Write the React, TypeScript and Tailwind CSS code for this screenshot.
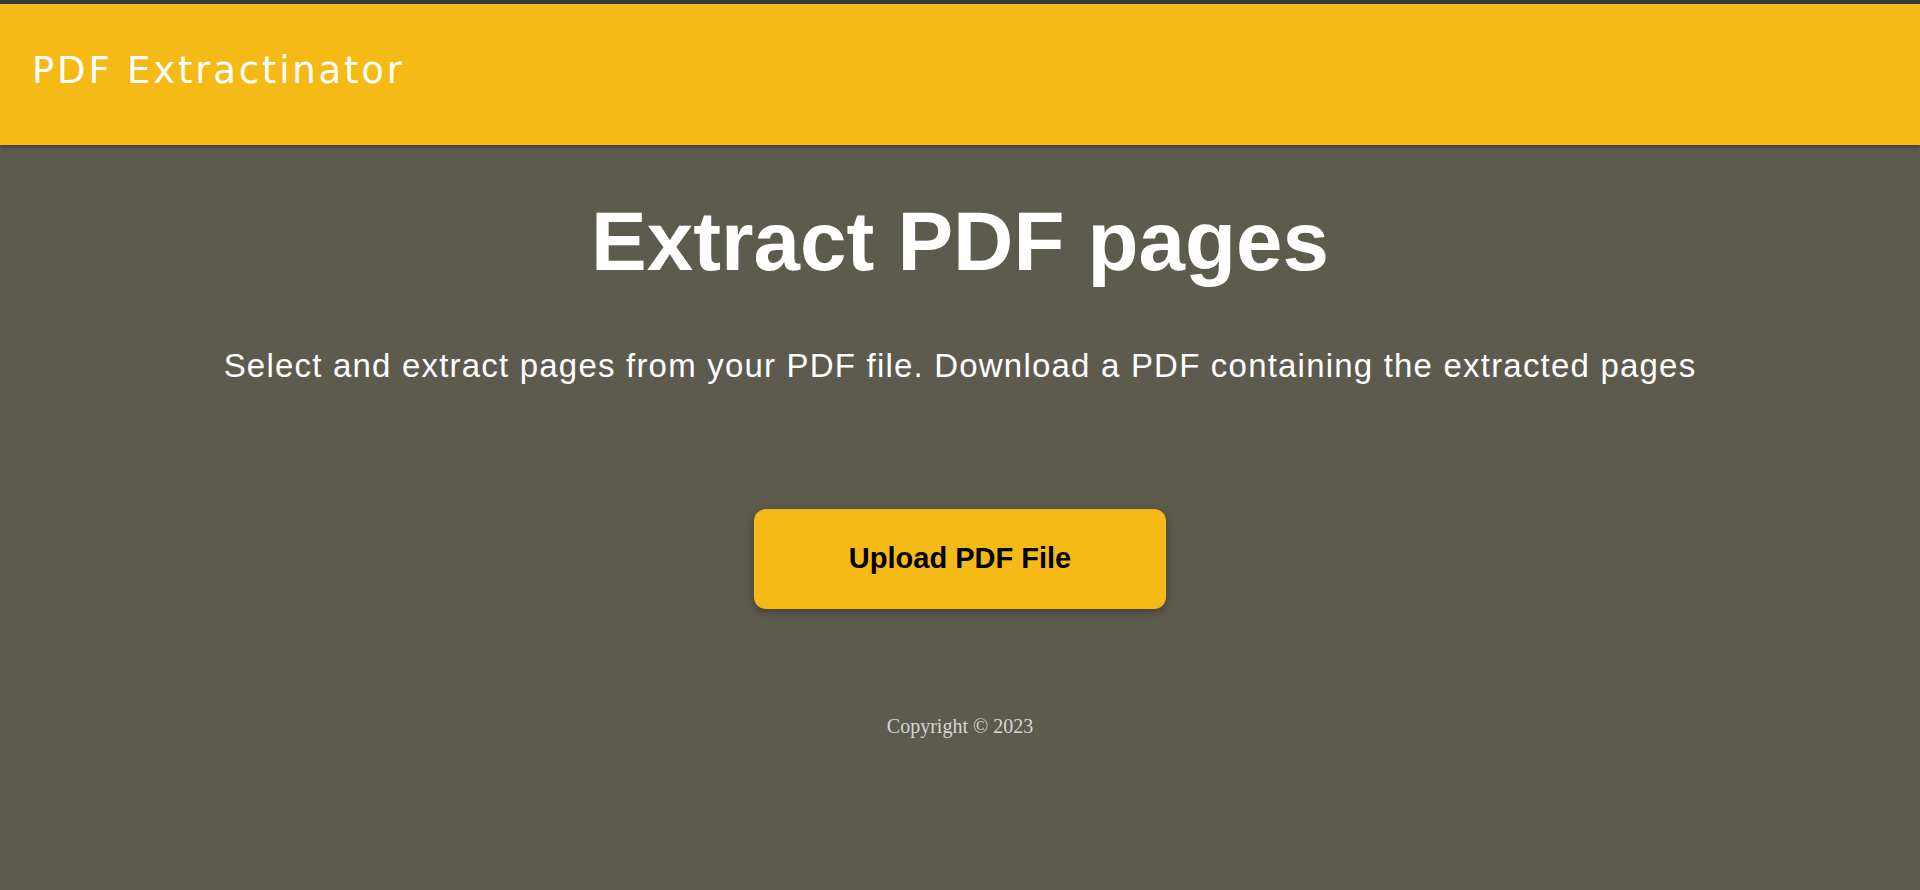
export default function App() {
  return (
    <div className="min-h-screen bg-[#5d5a4e] flex flex-col">
      <div className="h-[4px] bg-[#343a40]" />
      <header className="h-[141px] bg-[#f5ba15] flex items-center px-[32px] shadow-[0_2px_4px_rgba(0,0,0,0.35)] relative">
        <h1
          className="text-white text-[37px] leading-none -mt-[8px] tracking-[2.8px]"
          style={{ fontFamily: '"DejaVu Sans", sans-serif' }}
        >
          PDF Extractinator
        </h1>
      </header>
      <main
        className="flex flex-col items-center text-white"
        style={{ fontFamily: '"Liberation Sans", Arial, sans-serif' }}
      >
        <h2 className="mt-[55px] text-[83.5px] leading-none font-bold">Extract PDF pages</h2>
        <p className="mt-[65px] text-[33px] leading-none tracking-[1.2px]">
          Select and extract pages from your PDF file. Download a PDF containing the extracted pages
        </p>
        <button className="mt-[127px] w-[412px] h-[100px] rounded-[12px] bg-[#f5ba15] text-black text-[29px] font-bold shadow-[0_3px_8px_rgba(0,0,0,0.3)]">
          Upload PDF File
        </button>
        <footer
          className="mt-[107px] text-[20px] leading-none text-[#d6d6d6]"
          style={{ fontFamily: '"Liberation Serif", "Times New Roman", serif' }}
        >
          Copyright © 2023
        </footer>
      </main>
    </div>
  );
}
